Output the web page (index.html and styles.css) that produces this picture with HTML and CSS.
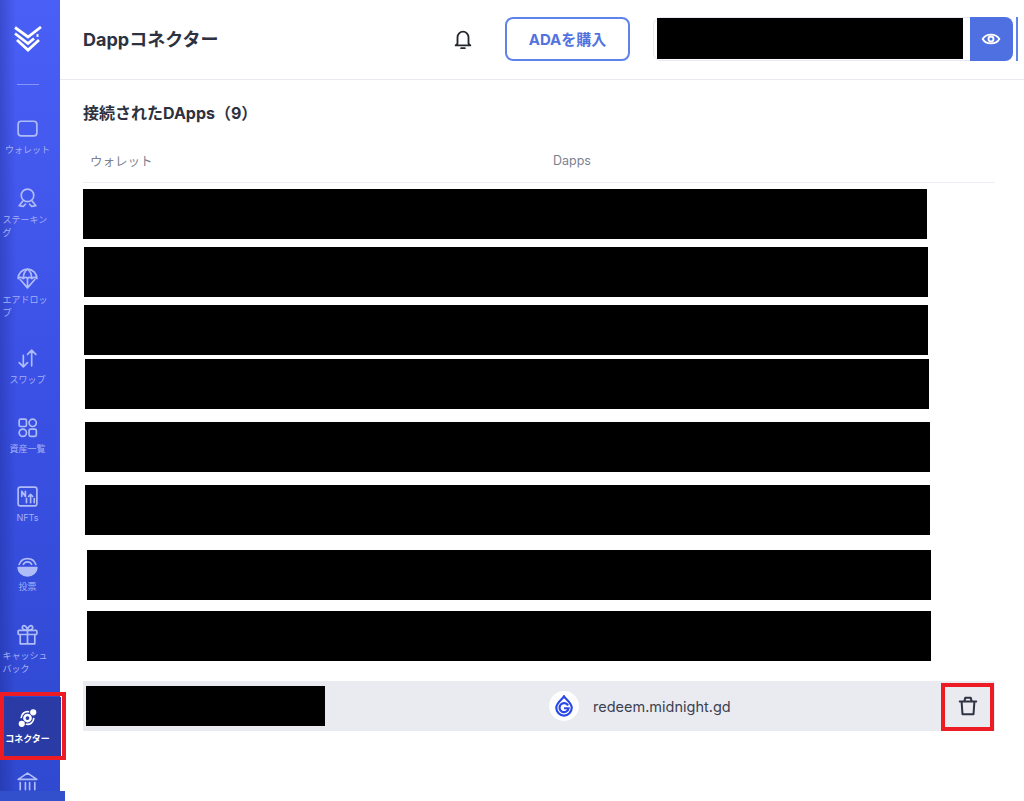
FILE: index.html
```html
<!DOCTYPE html>
<html lang="ja">
  <head>
    <meta charset="UTF-8" />
    <meta name="viewport" content="width=device-width, initial-scale=1.0" />
    <title>Dappコネクター</title>
    <link rel="stylesheet" href="styles.css">
  </head>
  <body>
    <div id="app">
      <nav class="sidebar">
        <div class="logo">
          <svg width="28" height="26" viewBox="0 0 28 26" fill="none" stroke="#fff" stroke-width="2.800">
            <path d="M1 1.500 L14 11 L27 1" />
            <path d="M1 7.500 L14 17.500 L20 12.500" />
            <path d="M3 14 L14 24 L25 14" />
            <path d="M22.500 9.500 L24.500 9.500" />
          </svg>
        </div>
        <div class="divider"></div>

        <a class="nav-item wallet">
          <svg class="nav-icon" viewBox="0 0 24 24"><rect x="3" y="5" width="18" height="14" rx="3" /></svg>
          <span>ウォレット</span>
        </a>
        <a class="nav-item two-line">
          <svg class="nav-icon" viewBox="0 0 24 24"><circle cx="12" cy="9" r="6" /><path d="M7.500 14.500 L4 19 L8 19.500 L10 17.500 M16.500 14.500 L20 19 L16 19.500 L14 17.500" /></svg>
          <span>ステーキング</span>
        </a>
        <a class="nav-item two-line">
          <svg class="nav-icon" viewBox="0 0 24 24"><path d="M3 12 A9 9 0 0 1 21 12 Q18.500 10 16 12 Q14 10 12 12 Q10 10 8 12 Q5.500 10 3 12 Z" /><path d="M12 3 C9 5 8 9 8 12 M12 3 C15 5 16 9 16 12 M5 13 L12 21 L19 13 M12 12 V21" /></svg>
          <span>エアドロップ</span>
        </a>
        <a class="nav-item">
          <svg class="nav-icon" viewBox="0 0 24 24"><path d="M8 9 V20 M4 16 L8 20 L12 16 M16 19 V4 M12 8 L16 4 L20 8" /></svg>
          <span>スワップ</span>
        </a>
        <a class="nav-item">
          <svg class="nav-icon" viewBox="0 0 24 24"><rect x="4" y="4" width="7" height="7" rx="1.500" /><circle cx="17" cy="7.500" r="3.500" /><circle cx="7.500" cy="17" r="3.500" /><rect x="13.500" y="13.500" width="7" height="7" rx="1.500" /></svg>
          <span>資産一覧</span>
        </a>
        <a class="nav-item">
          <svg class="nav-icon" viewBox="0 0 24 24"><rect x="3" y="3" width="18" height="18" rx="2" /><path d="M6.500 12 V7 L10 12 V7 M11 18 V14 M15 18 V10 M13 12 L15 10 L17 12 M18.500 18 V14" /></svg>
          <span>NFTs</span>
        </a>
        <a class="nav-item">
          <svg class="nav-icon" viewBox="0 0 24 24"><path class="solid" d="M3 14 H21 A9 8 0 0 1 3 14 Z" /><path d="M4 11 A8.500 8.500 0 0 1 20 11 M8 11 A4.500 4.500 0 0 1 16 11" /></svg>
          <span>投票</span>
        </a>
        <a class="nav-item two-line">
          <svg class="nav-icon" viewBox="0 0 24 24"><rect x="3" y="8" width="18" height="4" rx="1" /><path d="M5 12 V21 H19 V12 M12 8 V21 M12 8 C8 8 6 6 7.500 4 C9 2.500 12 5 12 8 C12 5 15 2.500 16.500 4 C18 6 16 8 12 8" /></svg>
          <span>キャッシュバック</span>
        </a>
        <a class="nav-item active">
          <svg class="nav-icon" viewBox="0 0 24 24"><circle cx="12" cy="12.500" r="3" stroke-width="2.400" /><circle cx="17.500" cy="7" r="2.200" fill="#fff" /><circle cx="6.500" cy="18" r="2.200" fill="#fff" /><path d="M13 6.500 A6 6 0 0 0 6 12 M11 18.500 A6 6 0 0 0 18 13" /></svg>
          <span>コネクター</span>
        </a>
        <a class="nav-item">
          <svg class="nav-icon" viewBox="0 0 24 24"><path d="M3 9 L12 3 L21 9 Z M5 12 V19 M10 12 V19 M14 12 V19 M19 12 V19 M2 22 H22" /></svg>
        </a>
        <div class="sidebar-strip"></div>
        <div class="red-box nav-mark"></div>
      </nav>

      <div class="main">
        <header class="topbar">
          <h1 class="page-title">Dappコネクター</h1>
          <svg class="bell" width="22" height="22" viewBox="0 0 24 24" fill="none" stroke="#23262f" stroke-width="2" stroke-linecap="round" stroke-linejoin="round">
            <path d="M6 17 V10 A6 6 0 0 1 18 10 V17 L20 19 H4 Z" />
            <path d="M10 22 H14" />
          </svg>
          <button class="buy-btn">ADAを購入</button>
          <div class="balance">
            <div class="bar balance-bar"></div>
            <button class="eye-btn">
              <svg width="20" height="20" viewBox="0 0 24 24" fill="none" stroke="#fff" stroke-width="2.200">
                <path d="M2 12 C6 5 18 5 22 12 C18 19 6 19 2 12 Z" />
                <circle cx="12" cy="12" r="3" />
              </svg>
            </button>
          </div>
          <div class="sliver"></div>
        </header>

        <section class="content">
          <h2 class="section-title">接続されたDApps（9）</h2>
          <div class="table-head">
            <div class="col-wallet">ウォレット</div>
            <div class="col-dapp">Dapps</div>
          </div>
          <div class="bar row-1"></div>
          <div class="bar row-2"></div>
          <div class="bar row-3"></div>
          <div class="bar row-4"></div>
          <div class="bar row-5"></div>
          <div class="bar row-6"></div>
          <div class="bar row-7"></div>
          <div class="bar row-8"></div>
          <div class="row">
            <div class="bar wallet-bar"></div>
            <div class="dapp-logo">
              <svg width="20" height="22" viewBox="0 0 22 24" fill="none" stroke="#2b48e8" stroke-width="2.400">
                <path d="M11 1.500 C12 4 19.500 8 19.500 14 A8.500 8.500 0 0 1 2.500 14 C2.500 8 10 4 11 1.500 Z" />
                <path d="M15.500 11.500 A5 5 0 1 0 16 14.500 H11" />
              </svg>
            </div>
            <div class="dapp-name">redeem.midnight.gd</div>
            <div class="trash">
              <svg width="22" height="22" viewBox="0 0 24 24" fill="none" stroke="#2f3342" stroke-width="2.200" stroke-linejoin="round" stroke-linecap="round">
                <path d="M3 7 H21 M5 7 L6 21 H18 L19 7 M8 7 L9 3 H15 L16 7" />
              </svg>
            </div>
            <div class="red-box trash-mark"></div>
          </div>
        </section>
      </div>
    </div>
  </body>
</html>
```

FILE: styles.css
```css
* {
  box-sizing: border-box;
}

html,
body {
  height: 100%;
  margin: 0;
  overflow: hidden;
}

body {
  font-family: Inter, "Noto Sans CJK JP", sans-serif;
  color: #2d3140;
  background: #fff;
}

#app {
  display: flex;
  height: 100vh;
}

.bar {
  background: #000;
}

.red-box {
  position: absolute;
  border: 4px solid #ed1c24;
}

/* sidebar */
.sidebar {
  position: relative;
  flex: 0 0 60px;
  width: 60px;
  height: 100vh;
  padding-right: 5px;
  display: flex;
  flex-direction: column;
  align-items: center;
  background-image: linear-gradient(90deg, rgba(20, 30, 120, 0.3) 0, rgba(20, 30, 120, 0) 16px), linear-gradient(180deg, #4a5ff5 0, #3a50e4 50%, #2f49cf 100%);
}

.logo {
  flex: none;
  height: 84px;
  padding-top: 26px;
}

.divider {
  flex: none;
  width: 22px;
  height: 1px;
  background: rgba(255, 255, 255, 0.35);
}

.nav-item {
  flex: none;
  width: 100%;
  height: 69px;
  padding-top: 31px;
  display: flex;
  flex-direction: column;
  align-items: center;
  gap: 2px;
  font-size: 9px;
  line-height: 13px;
  color: #a3b0f7;
}

.nav-item.wallet {
  height: 70px;
}

.nav-item.two-line {
  height: 80px;
}

.nav-item span {
  max-width: 50px;
}

.nav-icon {
  flex: none;
  width: 25px;
  height: 25px;
  fill: none;
  stroke: #b0bcf8;
  stroke-width: 1.600;
  stroke-linecap: round;
  stroke-linejoin: round;
}

.nav-icon .solid {
  fill: #b0bcf8;
}

.nav-item.active {
  align-self: flex-start;
  width: 58px;
  height: 60px;
  margin: 26px 0 0 3px;
  padding: 8px 9px 0 0;
  color: #fff;
  font-weight: 700;
  background: #2a3ba6;
}

.nav-item.active .nav-icon {
  stroke: #fff;
}

.nav-item.active + .nav-item {
  padding-top: 13px;
}

.nav-mark {
  left: 0;
  top: 692px;
  width: 66px;
  height: 68px;
}

.sidebar-strip {
  position: absolute;
  left: 0;
  top: 791px;
  width: 65px;
  height: 10px;
  background: #3350cc;
}

/* header */
.main {
  flex: 1;
  min-width: 0;
}

.topbar {
  height: 80px;
  padding: 0 6px 2px 23px;
  display: flex;
  align-items: center;
  border-bottom: 1px solid #e8eaf0;
}

.page-title {
  margin: 0 0 1px;
  font-size: 18px;
  font-weight: 700;
}

.bell {
  margin-left: auto;
}

.buy-btn {
  flex: none;
  width: 125px;
  height: 44px;
  margin-left: 31px;
  font: 700 15px Inter, "Noto Sans CJK JP", sans-serif;
  color: #5272e0;
  background: #fff;
  border: 2px solid #5f83e8;
  border-radius: 8px;
}

.balance {
  flex: none;
  display: flex;
  align-items: center;
  gap: 7px;
  width: 360px;
  height: 44px;
  margin-left: 23px;
  padding-left: 3px;
  border: 1px solid #e6e8f2;
  border-radius: 8px;
}

.balance-bar {
  flex: none;
  width: 306px;
  height: 41px;
}

.eye-btn {
  flex: none;
  display: flex;
  align-items: center;
  justify-content: center;
  width: 43px;
  height: 44px;
  margin-right: -1px;
  padding: 0 2px 0 0;
  border: none;
  border-radius: 0 8px 8px 0;
  background: #4f70e0;
}

.sliver {
  flex: none;
  width: 2px;
  height: 44px;
  margin-left: 3px;
  background: #5f83e8;
}

/* table */
.content {
  padding: 23px 29px 0 23px;
}

.section-title {
  margin: 0;
  height: 20px;
  font-size: 16px;
  line-height: 20px;
  font-weight: 700;
}

.table-head {
  display: flex;
  height: 45px;
  margin-top: 15px;
  padding: 0 0 0 7px;
  align-items: center;
  font-size: 12.500px;
  color: #7b8190;
  border-bottom: 1px solid #eceef3;
}

.table-head .col-wallet {
  width: 463px;
}

.row-1,
.row-2,
.row-3,
.row-4,
.row-5,
.row-6,
.row-7,
.row-8 {
  width: 844px;
  height: 50px;
}

.row-1 {
  margin-top: 6px;
}

.row-2 {
  margin: 8px 0 0 1px;
}

.row-3 {
  margin: 8px 0 0 1px;
}

.row-4 {
  margin: 4px 0 0 2px;
}

.row-5 {
  margin: 13px 0 0 2px;
  width: 845px;
}

.row-6 {
  margin: 13px 0 0 2px;
  width: 845px;
}

.row-7 {
  margin: 15px 0 0 4px;
}

.row-8 {
  margin: 11px 0 0 4px;
}

.row {
  position: relative;
  display: flex;
  align-items: center;
  width: 912px;
  height: 50px;
  margin-top: 20px;
  padding-left: 3px;
  background: #e9ebf1;
}

.wallet-bar {
  width: 239px;
  height: 40px;
}

.dapp-logo {
  display: flex;
  align-items: center;
  justify-content: center;
  width: 30px;
  height: 30px;
  margin-left: 224px;
  background: #fff;
  border-radius: 50%;
}

.dapp-name {
  margin-left: 14px;
  font-size: 14.500px;
  color: #3d4150;
}

.trash {
  display: flex;
  margin-left: auto;
  margin-right: 16px;
}

.trash-mark {
  right: 1px;
  top: 2px;
  width: 53px;
  height: 48px;
}
```
